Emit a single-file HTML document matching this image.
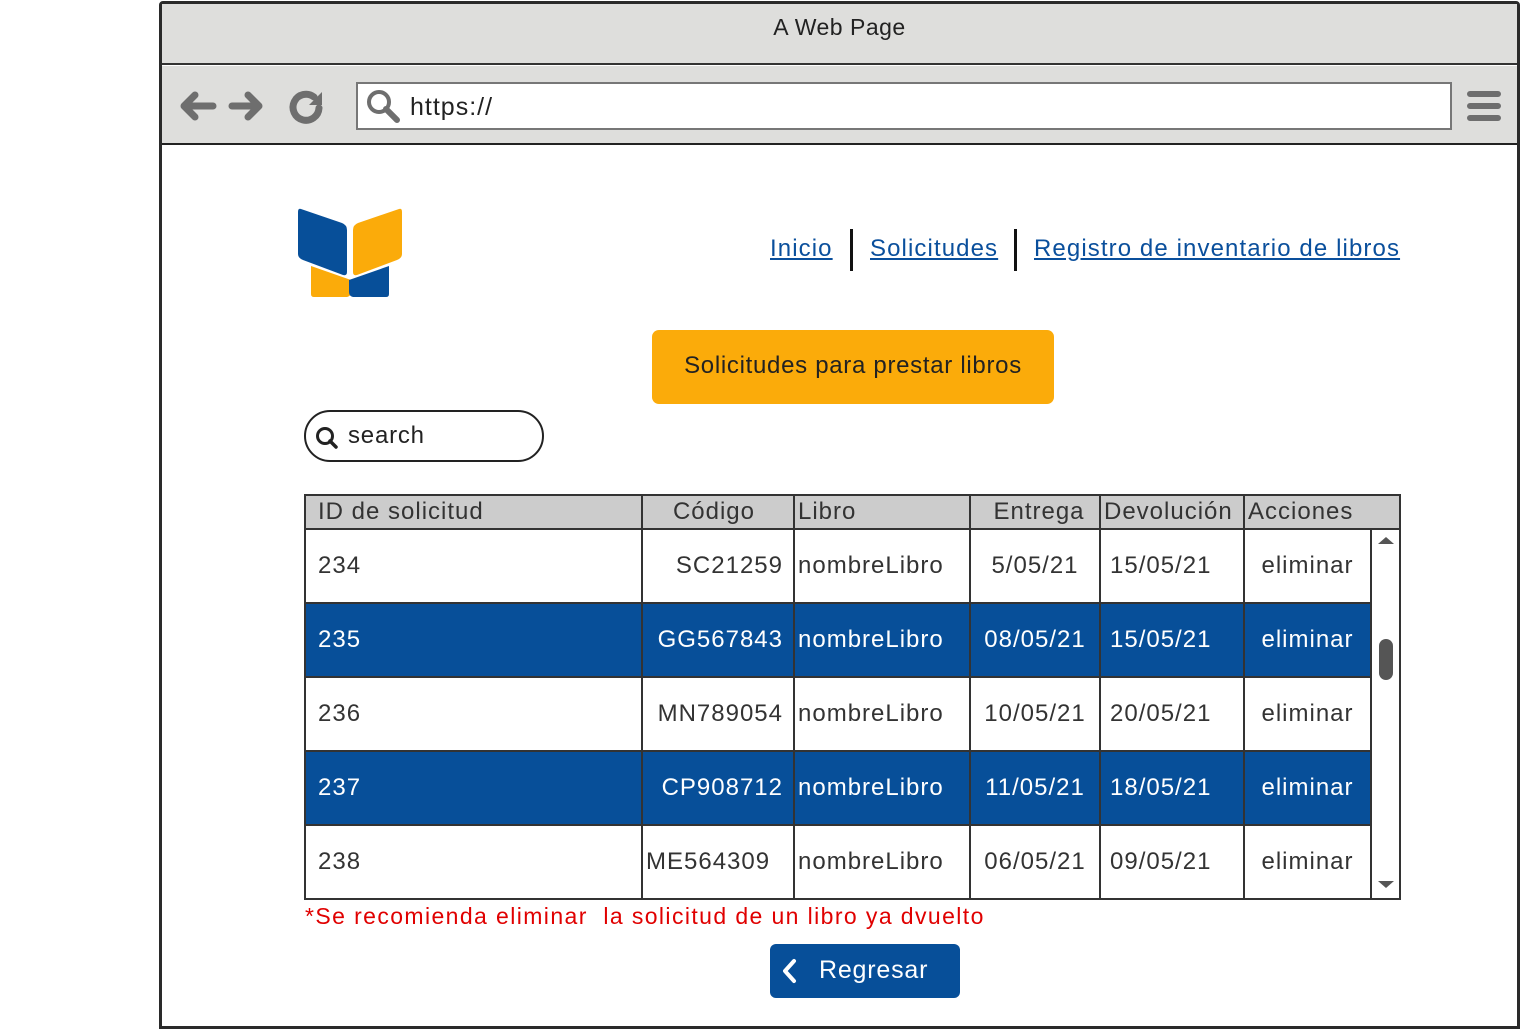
<!DOCTYPE html>
<html><head><meta charset="utf-8"><style>
*{margin:0;padding:0;box-sizing:border-box}
body{width:1520px;height:1030px;background:#fff;position:relative;overflow:hidden;font-family:"Liberation Sans",sans-serif;color:#333}
.abs{position:absolute}
.frame{left:159px;top:1px;width:1361px;height:1028px;border:3px solid #2a2a2a;border-radius:4px 4px 0 0}
.title{left:162px;top:4px;width:1355px;height:61px;background:#dededc;border-bottom:2px solid #333;text-align:center;font-size:23px;line-height:46px;color:#222;letter-spacing:.5px}
.tool{left:162px;top:66px;width:1355px;height:79px;background:#dededc;border-bottom:2px solid #222}
.url{left:356px;top:82px;width:1096px;height:48px;background:#fff;border:2px solid #777;font-size:25px;line-height:46px;padding-left:52px;color:#222;letter-spacing:1px}
.nav a{color:#0a4f9c;text-decoration:underline;font-size:24px;position:absolute;top:235px;letter-spacing:1.1px}
.bar{width:3px;height:42px;background:#111;top:229px}
table{border-collapse:collapse;position:absolute;left:304px;top:494px;font-size:24px;letter-spacing:1px}
td,th{border:2px solid #333;height:74px;padding:0 12px;font-weight:normal}
th{height:34px;background:#ccc;text-align:left;padding:0 4px 0 12px}
.b td{background:#074f99;color:#fff}
.r{text-align:right;padding-right:10px}
.c{text-align:center}
</style></head><body>
<div class="abs frame"></div>
<div class="abs title">A Web Page</div>
<div class="abs tool"></div>
<svg class="abs" style="left:175px;top:86px" width="160" height="40" viewBox="0 0 160 40">
<g stroke="#6e6e6e" stroke-width="7" stroke-linecap="round" stroke-linejoin="round" fill="none">
<path d="M38 20H10M20 9L9 20L20 31"/><path d="M57 20H84M73 9L84 20L73 31"/>
<path d="M144 22a13 13 0 1 1-5-11"/></g>
<path d="M147 6v13h-13z" fill="#6e6e6e"/></svg>
<div class="abs url">https://</div>
<svg class="abs" style="left:365px;top:88px" width="36" height="36"><circle cx="14" cy="14" r="10" stroke="#6e6e6e" stroke-width="4" fill="none"/><path d="M21 21l11 11" stroke="#6e6e6e" stroke-width="6" stroke-linecap="round"/></svg>
<svg class="abs" style="left:1466px;top:88px" width="36" height="36"><g stroke="#6e6e6e" stroke-width="6" stroke-linecap="round"><path d="M4 6h28M4 18h28M4 30h28"/></g></svg>
<svg class="abs" style="left:297px;top:208px" width="106" height="92" viewBox="0 0 106 92">
<path d="M14 58l40 14v12q0 4-4 5l-33 0q-3 0-3-3z" fill="#fbab0a"/>
<path d="M92 58l-40 14v12q0 4 4 5l33 0q3 0 3-3z" fill="#074f99"/>
<path d="M4 1l41 14q5 2 5 7v42q0 4-4 3L6 52q-5-2-5-6V4q0-4 3-3z" fill="#074f99"/>
<path d="M102 1L61 15q-5 2-5 7v42q0 4 4 3l40-15q5-2 5-6V4q0-4-3-3z" fill="#fbab0a"/>
</svg>
<div class="nav"><a style="left:770px">Inicio</a><div class="abs bar" style="left:850px"></div><a style="left:870px">Solicitudes</a><div class="abs bar" style="left:1014px"></div><a style="left:1034px">Registro de inventario de libros</a></div>
<div class="abs" style="left:652px;top:330px;width:402px;height:74px;background:#fbab0a;border-radius:7px;font-size:24px;line-height:72px;text-align:center;color:#222;letter-spacing:.7px">Solicitudes para prestar libros</div>
<div class="abs" style="left:304px;top:410px;width:240px;height:52px;border:2px solid #222;border-radius:26px;font-size:24px;line-height:48px;padding-left:42px;color:#222;letter-spacing:.8px">search</div>
<svg class="abs" style="left:314px;top:425px" width="26" height="26"><circle cx="11" cy="11" r="7.5" stroke="#222" stroke-width="3" fill="none"/><path d="M16 16l6 6" stroke="#222" stroke-width="3.5" stroke-linecap="round"/></svg>
<table>
<tr><th style="width:337px">ID de solicitud</th><th style="width:152px;text-align:right;padding-right:38px">Código</th><th style="width:176px;padding-left:3px">Libro</th><th style="width:130px;text-align:center">Entrega</th><th style="width:144px;padding-left:3px">Devolución</th><th style="width:156px;padding-left:3px" colspan="2">Acciones</th></tr>
<tr><td>234</td><td class="r">SC21259</td><td style="padding-left:3px">nombreLibro</td><td class="c">5/05/21</td><td style="padding-left:9px">15/05/21</td><td class="c" style="width:127px">eliminar</td><td rowspan="5" style="width:29px;padding:0"></td></tr>
<tr class="b"><td>235</td><td class="r">GG567843</td><td style="padding-left:3px">nombreLibro</td><td class="c">08/05/21</td><td style="padding-left:9px">15/05/21</td><td class="c">eliminar</td></tr>
<tr><td>236</td><td class="r">MN789054</td><td style="padding-left:3px">nombreLibro</td><td class="c">10/05/21</td><td style="padding-left:9px">20/05/21</td><td class="c">eliminar</td></tr>
<tr class="b"><td>237</td><td class="r">CP908712</td><td style="padding-left:3px">nombreLibro</td><td class="c">11/05/21</td><td style="padding-left:9px">18/05/21</td><td class="c">eliminar</td></tr>
<tr><td style="height:70px">238</td><td style="padding-left:3px">ME564309</td><td style="padding-left:3px">nombreLibro</td><td class="c">06/05/21</td><td style="padding-left:9px">09/05/21</td><td class="c">eliminar</td></tr>
</table>
<svg class="abs" style="left:1372px;top:532px" width="28" height="362"><path d="M6 12l8-7 8 7z" fill="#555"/><rect x="7" y="107" width="14" height="41" rx="7" fill="#555"/><path d="M6 349l8 7 8-7z" fill="#555"/></svg>
<div class="abs" style="left:305px;top:903px;font-size:23px;color:#e00000;letter-spacing:1.4px">*Se recomienda eliminar&nbsp; la solicitud de un libro ya dvuelto</div>
<div class="abs" style="left:770px;top:944px;width:190px;height:54px;background:#074f99;border-radius:6px;color:#fff;font-size:25px;line-height:52px;padding-left:49px;letter-spacing:.8px">Regresar</div>
<svg class="abs" style="left:780px;top:958px" width="20" height="26"><path d="M14 3L5 13l9 10" stroke="#fff" stroke-width="4" fill="none" stroke-linecap="round" stroke-linejoin="round"/></svg>
</body></html>
